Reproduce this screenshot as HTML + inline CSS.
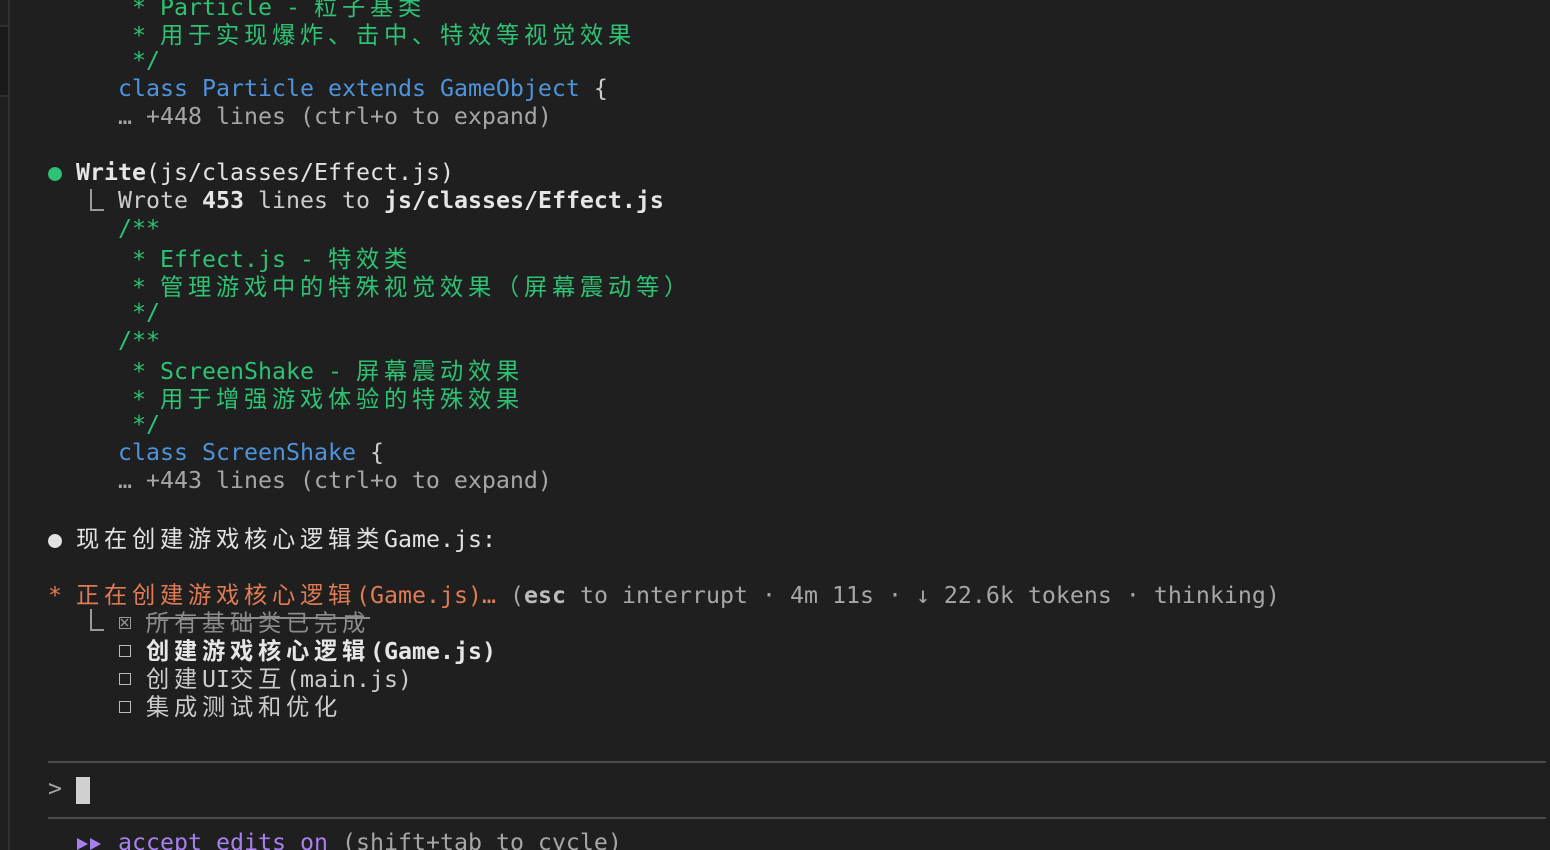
<!DOCTYPE html>
<html><head><meta charset="utf-8"><style>
html,body{margin:0;padding:0;background:#1f1f1f;width:1550px;height:850px;overflow:hidden;position:relative}
.l{position:absolute;left:48px;height:28px;line-height:28px;white-space:pre;font-family:"DejaVu Sans Mono","Liberation Mono","Noto Sans CJK SC",monospace;font-size:23.25px;color:#cccccc}
.c{font-family:"Noto Sans CJK SC",sans-serif;letter-spacing:4.75px}
.g{color:#2dc274}.b{color:#4e94dc}.d{color:#a6a6a6}.w{color:#e2e2e2}.o{color:#e07b53}.p{color:#a77ff0}
.bo{font-weight:bold;color:#e6e6e6}
.s{text-decoration:line-through;color:#8c8c8c}
.box{display:inline-block;box-sizing:border-box;width:12px;height:12px;border:1.5px solid #bbb;vertical-align:middle;margin:0 1px 3px 1px;position:relative}
.cor{display:inline-block;box-sizing:border-box;width:14px;height:22px;border-left:2px solid #999;border-bottom:2px solid #999;vertical-align:top;margin-top:2px}
.hr{position:absolute;left:48px;width:1498px;height:2px;background:#4a4a4a}
</style></head><body>
<div style="position:absolute;left:8px;top:0;width:2px;height:850px;background:#303030"></div>
<div style="position:absolute;left:0;top:25px;width:8px;height:68px;background:#191919;border-top:2px solid #303030;border-bottom:2px solid #303030"></div>

<div class="l g" style="top:-9px">      * Particle - <span class="c">粒子基类</span></div>
<div class="l g" style="top:19px">      * <span class="c">用于实现爆炸、击中、特效等视觉效果</span></div>
<div class="l g" style="top:47px">      */</div>
<div class="l" style="top:75px">     <span class="b">class Particle extends GameObject</span> {</div>
<div class="l d" style="top:103px">     … +448 lines (ctrl+o to expand)</div>

<div class="l" style="top:159px"><span class="g">●</span> <span class="bo">Write</span><span class="w">(js/classes/Effect.js)</span></div>
<div class="l" style="top:187px">   <span class="cor"></span> Wrote <span class="bo">453</span> lines to <span class="bo">js/classes/Effect.js</span></div>
<div class="l g" style="top:215px">     /**</div>
<div class="l g" style="top:243px">      * Effect.js - <span class="c">特效类</span></div>
<div class="l g" style="top:271px">      * <span class="c">管理游戏中的特殊视觉效果（屏幕震动等）</span></div>
<div class="l g" style="top:299px">      */</div>
<div class="l g" style="top:327px">     /**</div>
<div class="l g" style="top:355px">      * ScreenShake - <span class="c">屏幕震动效果</span></div>
<div class="l g" style="top:383px">      * <span class="c">用于增强游戏体验的特殊效果</span></div>
<div class="l g" style="top:411px">      */</div>
<div class="l" style="top:439px">     <span class="b">class ScreenShake</span> {</div>
<div class="l d" style="top:467px">     … +443 lines (ctrl+o to expand)</div>

<div class="l w" style="top:523px">● <span class="c">现在创建游戏核心逻辑类</span>Game.js:</div>

<div class="l" style="top:579px"><span class="o">* <span class="c">正在创建游戏核心逻辑</span>(Game.js)…</span> <span class="d">(<b style="color:#bbb">esc</b> to interrupt · 4m 11s · ↓ 22.6k tokens · thinking)</span></div>
<div class="l" style="top:607px">   <span class="cor"></span> <span class="box" style="border-color:#999"><svg width="9" height="9" viewBox="0 0 9 9" style="position:absolute;left:0;top:0"><path d="M1 1L8 8M8 1L1 8" stroke="#999" stroke-width="1.3"/></svg></span> <span class="s"><span class="c">所有基础类已完成</span></span></div>
<div class="l" style="top:635px">     <span class="box"></span> <span class="bo"><span class="c">创建游戏核心逻辑</span>(Game.js)</span></div>
<div class="l" style="top:663px">     <span class="box"></span> <span class="c">创建</span>UI<span class="c">交互</span>(main.js)</div>
<div class="l" style="top:691px">     <span class="box"></span> <span class="c">集成测试和优化</span></div>

<div class="hr" style="top:761px"></div>
<div class="l d" style="top:775px">&gt;</div>
<div style="position:absolute;left:76px;top:777px;width:14px;height:27px;background:#d0d0d0"></div>
<div class="hr" style="top:817px"></div>
<svg style="position:absolute;left:77px;top:837px" width="26" height="14" viewBox="0 0 26 14"><path d="M0 1L11 7L0 13Z M13 1L24 7L13 13Z" fill="#a77ff0"/></svg>
<div class="l" style="top:829px">     <span class="p">accept edits on</span> <span class="d">(shift+tab to cycle)</span></div>
</body></html>
